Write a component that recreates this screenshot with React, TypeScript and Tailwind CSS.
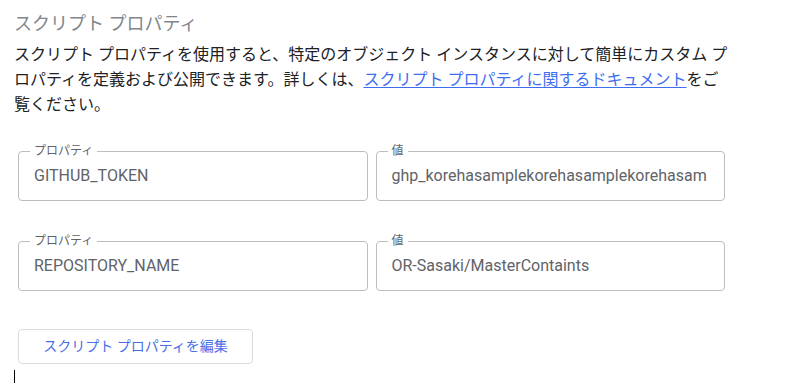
import React from 'react';

const FONT = { fontFamily: 'Roboto, "Noto Sans CJK JP", sans-serif' };

const PROPS: { key: string; value: string }[] = [
  { key: 'GITHUB_TOKEN', value: 'ghp_korehasamplekorehasamplekorehasam' },
  { key: 'REPOSITORY_NAME', value: 'OR-Sasaki/MasterContaints' },
];

function OutlinedField({ label, value }: { label: string; value: string }) {
  return (
    <div className="relative h-[50px] rounded-[4px] border border-[#bdbdbd] px-[15px] flex items-center">
      <span className="absolute -top-[8px] left-[11px] bg-white px-[4px] text-[12px] leading-[14px] text-[#5f6368]">
        {label}
      </span>
      <div className="overflow-hidden whitespace-nowrap text-[16px] text-[#5f6368]">{value}</div>
    </div>
  );
}

export default function App() {
  return (
    <div className="min-h-[383px] bg-white pl-[14px] pt-[12px]" style={FONT}>
      <h2 className="text-[18px] leading-[24px] font-normal text-[#80868b]">スクリプト プロパティ</h2>

      <p className="mt-[6px] w-[716px] text-[16px] leading-[25px] text-[#202124]">
        スクリプト プロパティを使用すると、特定のオブジェクト インスタンスに対して簡単にカスタム プロパティを定義および公開できます。詳しくは、
        <a href="#" className="text-[#3d6ef0] underline underline-offset-[2px]">
          スクリプト プロパティに関するドキュメント
        </a>
        をご覧ください。
      </p>

      {/* property rows */}
      <div className="ml-[4px] mt-[34px] w-[707px] flex flex-col gap-[40px]">
        {PROPS.map((p) => (
          <div key={p.key} className="grid grid-cols-2 gap-[8px]">
            <OutlinedField label="プロパティ" value={p.key} />
            <OutlinedField label="値" value={p.value} />
          </div>
        ))}
      </div>

      <button className="ml-[4px] mt-[38px] h-[35px] w-[235px] rounded-[4px] border border-[#dadce0] bg-white text-[14px] text-[#4a6ee8]">
        スクリプト プロパティを編集
      </button>

      <div className="mt-[6px] h-[14px] w-px bg-black" />
    </div>
  );
}
